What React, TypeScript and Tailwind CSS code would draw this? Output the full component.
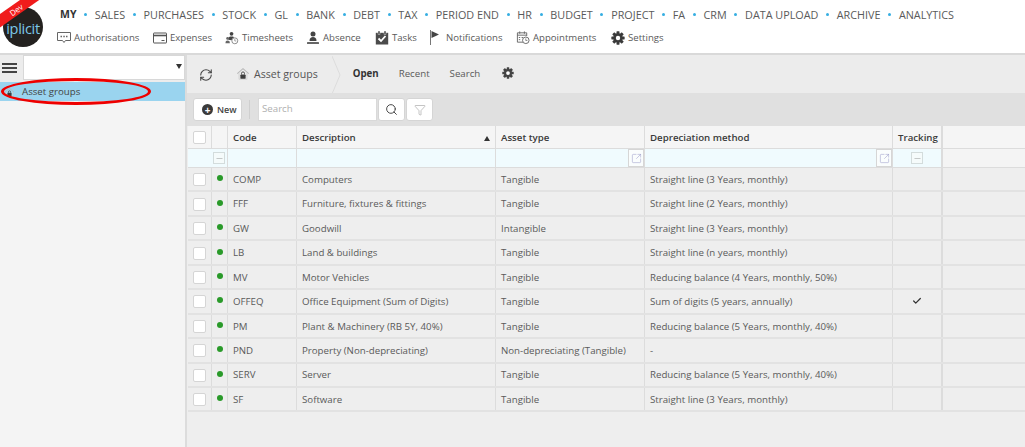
import React from "react";
import { RefreshCw, Search, Filter, Check, Minus, SquareArrowOutUpRight } from "lucide-react";

const NAV = ["SALES","PURCHASES","STOCK","GL","BANK","DEBT","TAX","PERIOD END","HR","BUDGET","PROJECT","FA","CRM","DATA UPLOAD","ARCHIVE","ANALYTICS"];

const ROWS = [
  ["COMP","Computers","Tangible","Straight line (3 Years, monthly)",false],
  ["FFF","Furniture, fixtures & fittings","Tangible","Straight line (2 Years, monthly)",false],
  ["GW","Goodwill","Intangible","Straight line (3 Years, monthly)",false],
  ["LB","Land & buildings","Tangible","Straight line (n years, monthly)",false],
  ["MV","Motor Vehicles","Tangible","Reducing balance (4 Years, monthly, 50%)",false],
  ["OFFEQ","Office Equipment (Sum of Digits)","Tangible","Sum of digits (5 years, annually)",true],
  ["PM","Plant & Machinery (RB 5Y, 40%)","Tangible","Reducing balance (5 Years, monthly, 40%)",false],
  ["PND","Property (Non-depreciating)","Non-depreciating (Tangible)","-",false],
  ["SERV","Server","Tangible","Reducing balance (5 Years, monthly, 40%)",false],
  ["SF","Software","Tangible","Straight line (3 Years, monthly)",false],
] as const;

const GRID = "grid grid-cols-[24px_16px_69px_199px_149px_248px_50px_1fr]";

function Gear({ size = 14, className = "" }: { size?: number; className?: string }) {
  const teeth = [0, 45, 90, 135];
  return (
    <svg width={size} height={size} viewBox="0 0 16 16" className={className} fill="currentColor">
      {teeth.map((a) => <rect key={a} x="6.3" y="0.4" width="3.4" height="15.2" rx="0.5" transform={`rotate(${a} 8 8)`} />)}
      <circle cx="8" cy="8" r="5.4" />
      <circle cx="8" cy="8" r="2.5" fill="white" />
    </svg>
  );
}

function HomeLock({ size = 16 }: { size?: number }) {
  return (
    <svg width={size} height={size} viewBox="0 0 16 16">
      <path d="M1.5 7.5 8 1.8l6.5 5.7" fill="none" stroke="#b9b9b9" strokeWidth="1.2" />
      <path d="M3.5 7v7h9V7" fill="none" stroke="#d0d0d0" strokeWidth="1" />
      <rect x="5" y="8.5" width="6" height="5" rx="1" fill="#3d3d3d" />
      <path d="M6.3 8.5V7.3a1.7 1.7 0 0 1 3.4 0v1.2" fill="none" stroke="#3d3d3d" strokeWidth="1" />
    </svg>
  );
}

const AuthIcon = () => (
  <svg width="14" height="13" viewBox="0 0 14 13" fill="none" stroke="#666">
    <path d="M.5 1.5h13v8h-5l-1.5 2-1.500-2h-5z" />
    <path d="M3.500 5.500h1.500M6.300 5.500h1.500M9 5.500h1.500" strokeWidth="1.300" />
  </svg>
);
const ExpIcon = () => (
  <svg width="14" height="12" viewBox="0 0 14 12" fill="none" stroke="#555">
    <rect x=".5" y="1" width="13" height="10" rx=".5" />
    <path d="M.5 3.500h13" strokeWidth="1.600" />
    <path d="M8.500 8.500h3" />
  </svg>
);
const TimeIcon = () => (
  <svg width="15" height="14" viewBox="0 0 15 14">
    <circle cx="7" cy="2.500" r="2" fill="#444" />
    <path d="M3.500 9c0-3 1.500-3.500 3.500-3.500S9.500 6 9.500 7L7 9.500z" fill="#444" />
    <circle cx="2.800" cy="7.500" r="1.500" fill="#666" />
    <path d="M.5 12.500c0-2 1-2.700 2.300-2.700s2.400.7 2.400 2.700z" fill="#666" />
    <circle cx="10.500" cy="10" r="3.200" fill="#fff" stroke="#888" />
    <path d="M10.500 8v2.200h1.600" fill="none" stroke="#888" strokeWidth=".8" />
  </svg>
);
const AbsIcon = () => (
  <svg width="14" height="14" viewBox="0 0 14 14" fill="#444">
    <circle cx="7" cy="3" r="2.500" />
    <path d="M3.500 10c0-3 1.500-4 3.500-4s3.500 1 3.500 4z" />
    <rect x="1" y="11" width="12" height="2" rx=".5" fill="#666" />
  </svg>
);
const TaskIcon = () => (
  <svg width="14" height="14" viewBox="0 0 14 14">
    <rect x=".8" y="1.800" width="12.400" height="11.700" fill="#4b4b4b" />
    <rect x="3" y="0" width="2" height="3.500" fill="#4b4b4b" stroke="#fff" strokeWidth=".4" />
    <rect x="9" y="0" width="2" height="3.500" fill="#4b4b4b" stroke="#fff" strokeWidth=".4" />
    <path d="M3.500 7.500 6 10l4.500-5" fill="none" stroke="#fff" strokeWidth="1.800" />
  </svg>
);
const FlagIcon = () => (
  <svg width="14" height="15" viewBox="0 0 14 15">
    <path d="M1.500 0v15" stroke="#777" strokeWidth="1" />
    <path d="M2.500 1v7L10 4.500z" fill="#444" />
  </svg>
);
const ApptIcon = () => (
  <svg width="15" height="15" viewBox="0 0 15 15" fill="none" stroke="#666">
    <path d="M8 12.500H1.500v-10h10V6" />
    <path d="M1.500 5h10M4 1v2.500M9 1v2.500" />
    <path d="M3 7.500h1.500M3 9.800h1.500M6 7.500h1.500" />
    <circle cx="10.500" cy="10.500" r="3.500" fill="#fff" />
    <path d="M10.500 8.500v2.200h1.700" strokeWidth=".8" />
  </svg>
);

function SubItem({ icon, label, width }: { icon: React.ReactNode; label: string; width: string }) {
  return (
    <div className={`flex items-center gap-[3px] ${width}`}>
      <span className="flex w-[14px] justify-center">{icon}</span>
      <span>{label}</span>
    </div>
  );
}

function Box() {
  return <div className="h-[13px] w-[13px] rounded-[2px] border border-[#d5d5d5] bg-white" />;
}

function MinusBox() {
  return (
    <div className="flex h-[12px] w-[12px] items-center justify-center border border-[#d3dcdc] bg-[#f5fbfb]">
      <Minus size={9} strokeWidth={1.2} className="text-[#888]" />
    </div>
  );
}

function ExpandBox() {
  return (
    <span className="flex h-[18px] w-[16px] items-center justify-center border border-[#d6d6d6] bg-[#fafdfd]">
      <SquareArrowOutUpRight size={11} strokeWidth={1} className="text-[#8a8ac0]" />
    </span>
  );
}

function Cell({ children, className = "" }: { children?: React.ReactNode; className?: string }) {
  return <div className={`flex items-center border-r border-[#dcdcdc] ${className}`}>{children}</div>;
}

export default function App() {
  return (
    <div className="flex h-[447px] w-[1025px] flex-col overflow-hidden bg-white text-[#5a5a5a] [font-family:'Open_Sans',sans-serif]">
      <header className="relative h-[55px] shrink-0 border-b-2 border-[#d9d9d9] pl-[60px] pt-[7px]">
        <div className="absolute left-[3px] top-[7px] flex h-[40px] w-[40px] items-center justify-center rounded-full bg-[#23211f] pt-[3px] text-[14.5px] tracking-[-0.3px] text-[#7cc8e8]">
          iplicit
        </div>
        <div className="absolute left-[-9px] top-[4px] flex h-[11px] w-[50px] -rotate-[35deg] items-center justify-center bg-[#f01c1c] text-[8px] leading-none text-white">
          Dev
        </div>
        <nav className="flex h-[15px] items-center text-[10.8px] leading-[15px]">
          <span className="text-[10.5px] font-bold text-[#333]">MY</span>
          {NAV.map((n) => (
            <React.Fragment key={n}>
              <span className="mx-[7.7px] h-[3px] w-[3px] rounded-full bg-[#35aee2]" />
              <span className="whitespace-nowrap">{n}</span>
            </React.Fragment>
          ))}
        </nav>
        <div className="-ml-[3px] mt-[8px] flex items-center whitespace-nowrap text-[9.6px] leading-[14px]">
          <SubItem icon={<AuthIcon />} label="Authorisations" width="w-[96px]" />
          <SubItem icon={<ExpIcon />} label="Expenses" width="w-[72px]" />
          <SubItem icon={<TimeIcon />} label="Timesheets" width="w-[81px]" />
          <SubItem icon={<AbsIcon />} label="Absence" width="w-[69px]" />
          <SubItem icon={<TaskIcon />} label="Tasks" width="w-[54px]" />
          <SubItem icon={<FlagIcon />} label="Notifications" width="w-[87px]" />
          <SubItem icon={<ApptIcon />} label="Appointments" width="w-[95px]" />
          <SubItem icon={<Gear size={14} className="text-[#3a3a3a]" />} label="Settings" width="w-[60px]" />
        </div>
      </header>

      <div className="flex min-h-0 flex-1">
        <aside className="relative w-[187px] shrink-0 border-r-2 border-[#dcdcdc] bg-[#f4f4f4]">
          <div className="flex h-[27px] bg-[#ececec] pb-[2px]">
            <div className="flex w-[23px] flex-col items-center justify-center gap-[2.5px] pr-[5px] pt-[1px]">
              <span className="h-[1.5px] w-[15px] bg-[#444]" />
              <span className="h-[1.5px] w-[15px] bg-[#444]" />
              <span className="h-[1.5px] w-[15px] bg-[#444]" />
            </div>
            <div className="relative flex-1 border border-[#d8d8d8] bg-white">
              <span className="absolute right-[2px] top-[8px] h-0 w-0 border-x-[3px] border-t-[5px] border-x-transparent border-t-[#333]" />
            </div>
          </div>
          <div className="flex h-[19px] items-center bg-[#9ad4ef] pl-[3px] pt-[2px] text-[9.7px] text-[#444]">
            <span className="mr-[7px] flex w-[12px] justify-center"><HomeLock size={11} /></span>
            Asset groups
          </div>
          <div className="pointer-events-none absolute left-[1px] top-[23px] h-[27px] w-[150px] rounded-[50%] border-[3px] border-[#ee0000]" />
        </aside>

        <main className="flex min-w-0 flex-1 flex-col bg-[#eeeeee]">
          <div className="flex h-[38px] shrink-0 items-center bg-[#ececec] pl-[12px] pt-[1px] text-[9.7px]">
            <RefreshCw size={14} strokeWidth={1.8} className="text-[#444]" />
            <span className="ml-[23px] flex items-center gap-[4px] text-[10.6px]"><HomeLock size={14} /><span className="text-[#555]">Asset groups</span></span>
            <svg width="10" height="38" viewBox="0 0 10 38" className="ml-[14px]"><path d="M0 0 8 19 0 38" fill="none" stroke="#dcdcdc" /></svg>
            <span className="ml-[11px] font-bold text-[#333]">Open</span>
            <span className="ml-[20px]">Recent</span>
            <span className="ml-[20px]">Search</span>
            <Gear size={12} className="ml-[22px] -mt-[3px] text-[#444]" />
          </div>
          <div className="flex h-[33px] shrink-0 items-center bg-[#e0e0e0] pl-[6px]">
            <button className="flex h-[23px] w-[49px] items-center gap-[4px] rounded-[3px] border border-[#d5d5d5] bg-white pl-[8px] text-[9px] font-semibold text-[#444]">
              <span className="flex h-[11px] w-[11px] items-center justify-center rounded-full bg-[#3a3a3a] text-[10px] font-bold leading-none text-white">+</span>New
            </button>
            <span className="ml-[7px] h-[19px] w-px bg-[#cfcfcf]" />
            <div className="ml-[8px] flex h-[23px] w-[119px] items-center border border-[#d9d9d9] bg-white pl-[3px] text-[9.7px] text-[#b0b0b0]">Search</div>
            <button className="ml-[1px] flex h-[23px] w-[27px] items-center justify-center rounded-[3px] border border-[#d5d5d5] bg-white"><Search size={13} strokeWidth={1.8} className="text-[#444]" /></button>
            <button className="ml-[1px] flex h-[23px] w-[27px] items-center justify-center rounded-[3px] border border-[#d5d5d5] bg-white"><Filter size={12} strokeWidth={1} className="text-[#888]" /></button>
          </div>

          <div className="ml-px flex-1 text-[9.7px]">
            <div className={`${GRID} h-[23px] border-b border-[#dcdcdc] bg-[#f5f5f5] font-semibold text-[#3a3a3a]`}>
              <Cell className="pl-[5px]"><Box /></Cell>
              <Cell />
              <Cell className="pl-[5px] pt-[2px]">Code</Cell>
              <Cell className="justify-between px-[5px] pt-[2px]">Description<span className="h-0 w-0 border-x-[3px] border-b-[5px] border-x-transparent border-b-[#333]" /></Cell>
              <Cell className="pl-[5px] pt-[2px]">Asset type</Cell>
              <Cell className="pl-[5px] pt-[2px]">Depreciation method</Cell>
              <Cell className="border-r-2 pl-[5px] pt-[2px]">Tracking</Cell>
            </div>
            <div className={`${GRID} h-[19px] border-b border-[#dcdcdc] bg-[#f0fbfe]`}>
              <Cell className="border-r-0" />
              <Cell className="pl-[1px]"><MinusBox /></Cell>
              <Cell />
              <Cell />
              <Cell className="justify-end"><ExpandBox /></Cell>
              <Cell className="justify-end"><ExpandBox /></Cell>
              <Cell className="justify-center border-r-2"><MinusBox /></Cell>
              <div className="bg-[#f4f4f4]" />
            </div>
            {ROWS.map((r) => (
              <div key={r[0]} className={`${GRID} h-[24.45px] border-b-2 border-[#e2e2e2]`}>
                <Cell className="pl-[5px] pt-[1px]"><Box /></Cell>
                <Cell className="justify-center pb-[2px]"><span className="h-[6px] w-[6px] rounded-full bg-[#2a9a2a]" /></Cell>
                <Cell className="pl-[5px] pt-[2px]">{r[0]}</Cell>
                <Cell className="pl-[5px] pt-[2px]">{r[1]}</Cell>
                <Cell className="pl-[5px] pt-[2px]">{r[2]}</Cell>
                <Cell className="pl-[5px] pt-[2px]">{r[3]}</Cell>
                <Cell className="justify-center border-r-2">{r[4] && <Check size={10} strokeWidth={3} className="text-[#333]" />}</Cell>
              </div>
            ))}
          </div>
        </main>
      </div>
    </div>
  );
}
